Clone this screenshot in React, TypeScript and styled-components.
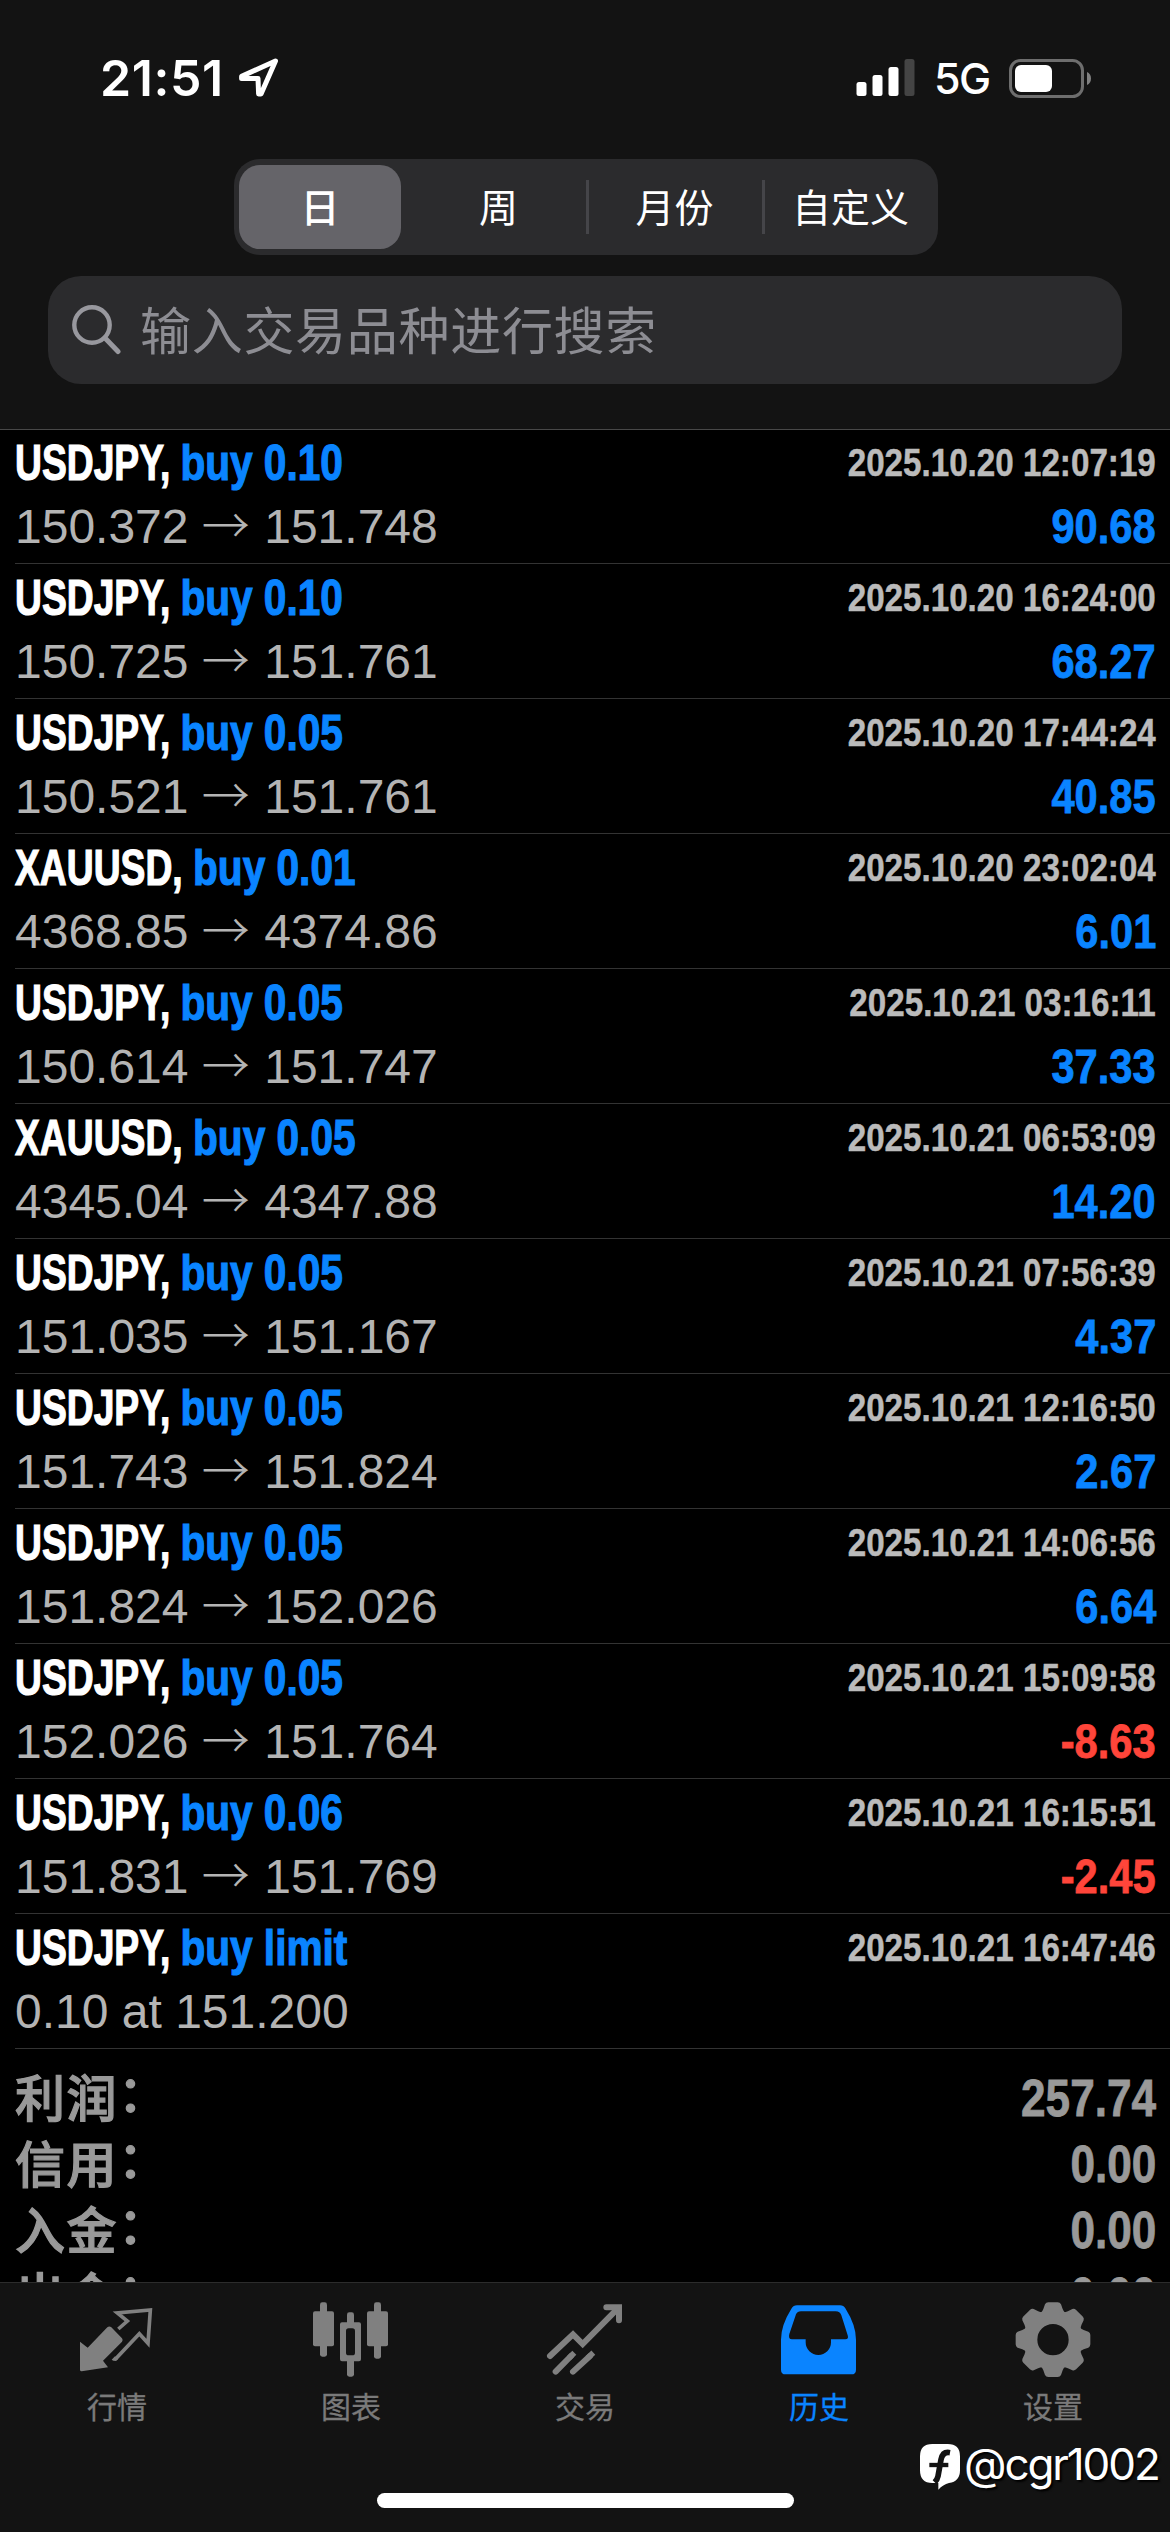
import React, { useState } from "react";
import styled, { createGlobalStyle } from "styled-components";

type Deal = {
  symbol: string;
  action: string;
  time: string;
  open?: string;
  close?: string;
  note?: string;
  profit?: string;
};

const deals: Deal[] = [
  { symbol: "USDJPY", action: "buy 0.10", time: "2025.10.20 12:07:19", open: "150.372", close: "151.748", profit: "90.68" },
  { symbol: "USDJPY", action: "buy 0.10", time: "2025.10.20 16:24:00", open: "150.725", close: "151.761", profit: "68.27" },
  { symbol: "USDJPY", action: "buy 0.05", time: "2025.10.20 17:44:24", open: "150.521", close: "151.761", profit: "40.85" },
  { symbol: "XAUUSD", action: "buy 0.01", time: "2025.10.20 23:02:04", open: "4368.85", close: "4374.86", profit: "6.01" },
  { symbol: "USDJPY", action: "buy 0.05", time: "2025.10.21 03:16:11", open: "150.614", close: "151.747", profit: "37.33" },
  { symbol: "XAUUSD", action: "buy 0.05", time: "2025.10.21 06:53:09", open: "4345.04", close: "4347.88", profit: "14.20" },
  { symbol: "USDJPY", action: "buy 0.05", time: "2025.10.21 07:56:39", open: "151.035", close: "151.167", profit: "4.37" },
  { symbol: "USDJPY", action: "buy 0.05", time: "2025.10.21 12:16:50", open: "151.743", close: "151.824", profit: "2.67" },
  { symbol: "USDJPY", action: "buy 0.05", time: "2025.10.21 14:06:56", open: "151.824", close: "152.026", profit: "6.64" },
  { symbol: "USDJPY", action: "buy 0.05", time: "2025.10.21 15:09:58", open: "152.026", close: "151.764", profit: "-8.63" },
  { symbol: "USDJPY", action: "buy 0.06", time: "2025.10.21 16:15:51", open: "151.831", close: "151.769", profit: "-2.45" },
  { symbol: "USDJPY", action: "buy limit", time: "2025.10.21 16:47:46", note: "0.10 at 151.200" },
];

const totals = [
  { name: "利润", value: "257.74" },
  { name: "信用", value: "0.00" },
  { name: "入金", value: "0.00" },
  { name: "出金", value: "0.00" },
];

const periods = ["日", "周", "月份", "自定义"];

//* icons

const LocationIcon = () => (
  <svg width="42" height="42" viewBox="0 0 42 42" fill="none" stroke="#fff" strokeWidth="5" strokeLinejoin="round">
    <path d="M37.5 4 L3.6 19.4 L3.6 21.4 L20 21.4 L20.6 37 L23 37 Z" />
  </svg>
);

const SignalIcon = () => (
  <svg width="60" height="38" viewBox="0 0 60 38" fill="#fff">
    <rect x="0.5" y="23" width="10" height="14" rx="2.5" />
    <rect x="16.5" y="16" width="10" height="21" rx="2.5" />
    <rect x="32.5" y="8" width="10" height="29" rx="2.5" />
    <rect x="48.5" y="0" width="10" height="37" rx="2.5" fill="#444" />
  </svg>
);

const BatteryIcon = () => (
  <svg width="83" height="39" viewBox="0 0 83 39">
    <rect x="1.5" y="1.5" width="72" height="36" rx="10" fill="none" stroke="#6e6e6e" strokeWidth="3" />
    <rect x="6" y="6" width="37" height="27" rx="6" fill="#fff" />
    <path d="M78 13 C80.5 14 82 16.5 82 19.5 C82 22.5 80.5 25 78 26 Z" fill="#808080" />
  </svg>
);

const SearchIcon = () => (
  <svg width="50" height="50" viewBox="0 0 50 50" fill="none" stroke="#98989e" strokeLinecap="round">
    <circle cx="20" cy="20" r="17.7" strokeWidth="4.4" />
    <path d="M33 33 L46 46.5" strokeWidth="5" />
  </svg>
);

const QuotesIcon = () => (
  <svg width="80" height="80" viewBox="231 80 240 240" fill="#808080">
    <path d="M240 214 L263 232 L322 171 Q328 166 334 171 L366 204 Q370 209 366 214 L309 271 L324 291 L245 303 Q240 303 240 298 Z" />
    <path
      d="M355 176 L382 152 L352 128 L451 119 L444 219 L418 190 L346 267"
      fill="none"
      stroke="#808080"
      strokeWidth="11"
    />
    <path d="M335 268 L345 258 L354 266 L348 272 L340 271 Z" />
  </svg>
);

const ChartIcon = () => (
  <svg width="80" height="80" viewBox="933 80 240 240" fill="#808080">
    <rect x="960" y="96" width="21" height="163" rx="7" />
    <rect x="939" y="123" width="63" height="105" rx="6" />
    <rect x="1122" y="96" width="21" height="169" rx="7" />
    <rect x="1101" y="123" width="63" height="105" rx="6" />
    <rect x="1041" y="126" width="21" height="40" rx="7" />
    <rect x="1041" y="262" width="21" height="57" rx="7" />
    <path
      fillRule="evenodd"
      d="M1026 156 h51 q6 0 6 6 v105 q0 6 -6 6 h-51 q-6 0 -6 -6 v-105 q0 -6 6 -6 Z M1046 174 q-8 0 -8 8 v65 q0 8 8 8 h11 q8 0 8 -8 v-65 q0 -8 -8 -8 Z"
    />
  </svg>
);

const TradeIcon = () => (
  <svg width="80" height="80" viewBox="255 80 240 240" fill="none" stroke="#808080" strokeLinecap="round">
    <path d="M270 257 L339 192 L368 221 L470 118" strokeWidth="18" />
    <path d="M439 111 L477 111 L477 150" strokeWidth="18" />
    <path d="M455 108 L480 108 L480 132 Z" fill="#808080" stroke="none" />
    <path d="M287 304 L333 257 M339 304 L390 257" strokeWidth="18" />
    <path d="M328 262 L343 247 M383 263 L400 247" strokeWidth="17" strokeLinecap="butt" />
  </svg>
);

const HistoryIcon = () => (
  <svg width="80" height="80" viewBox="957 80 240 240" fill="#0a84ff">
    <path
      fillRule="evenodd"
      d="M1011 105 H1140 Q1151 105 1156 114 Q1188 165 1188 208 V298 Q1188 312 1174 312 H977 Q963 312 963 298 V208 Q963 165 995 114 Q1000 105 1011 105 Z M1023 123 Q1012 123 1008 132 L988 191 Q984 207 996 207 H1037 V216 A38 38 0 0 0 1113 216 V207 H1156 Q1167 207 1163 195 L1144 135 Q1140 123 1127 123 Z"
    />
  </svg>
);

const SettingsIcon = () => (
  <svg width="80" height="80" viewBox="-120 -128 240 240" fill="#808080">
    {[0, 45, 90, 135, 180, 225, 270, 315].map((angle) => (
      <path
        key={angle}
        transform={`rotate(${angle})`}
        d="M-37 -80 Q-32 -84 -29 -92 L-24 -106 Q-21 -112 -14 -112 H14 Q21 -112 24 -106 L29 -92 Q32 -84 37 -80 L25 -60 H-25 Z"
      />
    ))}
    <circle r="68" fill="none" stroke="#808080" strokeWidth="42" />
  </svg>
);

const BadgeIcon = () => (
  <svg width="42" height="48" viewBox="0 0 126 144">
    <path d="M40 3 H86 Q123 3 123 40 V82 Q123 116 90 120 Q72 125 58 140 L58 120 H40 Q3 120 3 82 V40 Q3 3 40 3 Z" fill="#fff" />
    <path d="M93 29 Q71 25 66 50 L57 100 Q55 110 47 118" fill="none" stroke="#131313" strokeWidth="17" />
    <path d="M31 66 H88" fill="none" stroke="#131313" strokeWidth="13" />
  </svg>
);

const tabs = [
  { name: "行情", icon: QuotesIcon },
  { name: "图表", icon: ChartIcon },
  { name: "交易", icon: TradeIcon },
  { name: "历史", icon: HistoryIcon },
  { name: "设置", icon: SettingsIcon },
];

function App() {
  const [period, setPeriod] = useState("日");
  const [tab, setTab] = useState("历史");

  return (
    <>
      <GlobalStyle />
      <Screen>
        <Header>
          <StatusBar>
            <StatusLeft>
              <Clock>21:51</Clock>
              <LocationIcon />
            </StatusLeft>
            <StatusRight>
              <SignalIcon />
              <Network>5G</Network>
              <BatteryIcon />
            </StatusRight>
          </StatusBar>

          <Segments>
            {periods.map((name, index) => (
              <Segment key={name} $divider={index > 1} onClick={() => setPeriod(name)}>
                <SegmentPill $active={name === period}>{name}</SegmentPill>
              </Segment>
            ))}
          </Segments>

          <SearchBox>
            <SearchIcon />
            <Placeholder>输入交易品种进行搜索</Placeholder>
          </SearchBox>
        </Header>

        <History>
          {deals.map((deal) => (
            <DealRow key={deal.time}>
              <DealTitle>
                {deal.symbol}, <DealAction>{deal.action}</DealAction>
              </DealTitle>
              <DealTime>{deal.time}</DealTime>
              <DealPrice>
                {deal.note ? (
                  deal.note
                ) : (
                  <>
                    {deal.open} <Arrow>→</Arrow> {deal.close}
                  </>
                )}
              </DealPrice>
              {deal.profit && <DealProfit $loss={deal.profit.startsWith("-")}>{deal.profit}</DealProfit>}
            </DealRow>
          ))}

          <Totals>
            {totals.map((total) => (
              <TotalRow key={total.name}>
                <TotalName>
                  {total.name}
                  <Colon>：</Colon>
                </TotalName>
                <TotalValue>{total.value}</TotalValue>
              </TotalRow>
            ))}
          </Totals>
        </History>

        <TabBar>
          <Tabs>
            {tabs.map(({ name, icon: Icon }) => (
              <Tab key={name} $active={name === tab} onClick={() => setTab(name)}>
                <Icon />
                <span>{name}</span>
              </Tab>
            ))}
          </Tabs>
          <HomeIndicator />
        </TabBar>

        <Watermark>
          <BadgeIcon />
          <WatermarkName>@cgr1002</WatermarkName>
        </Watermark>
      </Screen>
    </>
  );
}

const GlobalStyle = createGlobalStyle`
  * {
    box-sizing: border-box;
  }

  body {
    margin: 0;
    background: #000;
    font-family: "Liberation Sans", "Noto Sans CJK SC", sans-serif;
  }

  svg {
    display: block;
    flex-shrink: 0;
  }
`;

const Screen = styled.div`
  position: relative;
  display: flex;
  flex-direction: column;
  width: 1170px;
  height: 2532px;
  overflow: hidden;
  background: #000;
`;

const Header = styled.header`
  display: flex;
  flex-direction: column;
  align-items: center;
  flex-shrink: 0;
  height: 430px;
  background: #131313;
  border-bottom: 1px solid #484848;
`;

const StatusBar = styled.div`
  display: flex;
  justify-content: space-between;
  align-items: center;
  width: 100%;
  height: 159px;
  padding: 0 78px 3px 100px;
`;

const StatusLeft = styled.div`
  display: flex;
  align-items: center;
  gap: 14px;
`;

const StatusRight = styled.div`
  display: flex;
  align-items: center;
  gap: 18px;
`;

const Clock = styled.span`
  width: 124px;
  color: #fff;
  font: 600 50px/60px Inter, sans-serif;
  letter-spacing: 0.6px;
  white-space: nowrap;
`;

const Network = styled.span`
  width: 57px;
  color: #fff;
  font: 500 43px/50px Inter, sans-serif;
  letter-spacing: -1.5px;
`;

const Segments = styled.div`
  display: grid;
  grid-template-columns: repeat(4, 1fr);
  align-items: center;
  width: 704px;
  height: 96px;
  margin-left: 2px;
  background: #2b2b2d;
  border-radius: 26px;
`;

const Segment = styled.div<{ $divider: boolean }>`
  display: flex;
  align-items: center;
  justify-content: center;
  height: 54px;
  border-left: 3px solid ${(props) => (props.$divider ? "#454549" : "transparent")};
`;

const SegmentPill = styled.div<{ $active: boolean }>`
  flex-shrink: 0;
  width: 162px;
  height: 84px;
  margin-left: ${(props) => (props.$active ? "-7px" : "-2px")};
  border-radius: 21px;
  background: ${(props) => (props.$active ? "#656469" : "transparent")};
  color: #fff;
  font: ${(props) => (props.$active ? 500 : 400)} 39px/80px "Noto Sans CJK SC", sans-serif;
  text-align: center;
`;

const SearchBox = styled.div`
  display: flex;
  align-items: center;
  gap: 18px;
  width: 1074px;
  height: 108px;
  margin-top: 21px;
  padding-left: 24px;
  background: #2b2b2d;
  border-radius: 33px;
`;

const Placeholder = styled.span`
  padding-bottom: 4px;
  color: #8d8d93;
  font: 400 51px/70px "Noto Sans CJK SC", sans-serif;
  letter-spacing: 0.7px;
`;

const History = styled.main`
  flex: 1;
  min-height: 0;
  margin-top: -1px;
  overflow: hidden;
`;

const DealRow = styled.div`
  display: grid;
  grid-template-columns: 1fr auto;
  grid-template-rows: 65px 66px;
  height: 135px;
  margin-left: 15px;
  padding-right: 14px;
  border-bottom: 1px solid #333;
  white-space: nowrap;
`;

/* the Latin face is squeezed sideways to get the condensed look */
const DealTitle = styled.div`
  justify-self: start;
  color: #fff;
  font-size: 50px;
  font-weight: 700;
  line-height: 69px;
  transform: scaleX(0.745);
  transform-origin: left;
  -webkit-text-stroke: 1.2px currentColor;
`;

const DealAction = styled.span`
  display: inline-block;
  color: #0a84ff;
  transform: scaleX(1.09);
  transform-origin: left;
`;

const DealTime = styled.div`
  color: #bbb;
  font-size: 39.5px;
  font-weight: 700;
  line-height: 66px;
  transform: scaleX(0.84);
  transform-origin: right;
  -webkit-text-stroke: 0.5px currentColor;
`;

const DealPrice = styled.div`
  color: #b4b4b4;
  font-size: 48px;
  line-height: 66px;
`;

const Arrow = styled.span`
  margin-right: 1px;
  font-family: "Noto Sans CJK SC", sans-serif;
  font-weight: 300;
  line-height: 0;
`;

const DealProfit = styled.div<{ $loss: boolean }>`
  justify-self: end;
  color: ${(props) => (props.$loss ? "#ff453a" : "#0a84ff")};
  font-size: 49px;
  font-weight: 700;
  line-height: 65px;
  transform: scaleX(0.85);
  transform-origin: right;
  -webkit-text-stroke: 0.8px currentColor;
`;

const Totals = styled.section`
  padding: 16px 14px 0 15px;
`;

const TotalRow = styled.div`
  display: flex;
  justify-content: space-between;
  height: 66px;
  color: #999;
`;

const TotalName = styled.span`
  font: 500 50px/61px "Noto Sans CJK SC", sans-serif;
  letter-spacing: 1.5px;
  -webkit-text-stroke: 1.2px currentColor;
`;

const Colon = styled.span`
  line-height: 0;
  vertical-align: 5px;
`;

const TotalValue = styled.span`
  font-size: 51px;
  font-weight: 700;
  line-height: 67px;
  transform: scaleX(0.865);
  transform-origin: right;
  -webkit-text-stroke: 0.8px currentColor;
`;

const TabBar = styled.nav`
  display: flex;
  flex-direction: column;
  align-items: center;
  justify-content: space-between;
  flex-shrink: 0;
  height: 250px;
  padding: 14px 0 24px;
  background: #131313;
  border-top: 1px solid #2c2c2c;
`;

const Tabs = styled.div`
  display: grid;
  grid-template-columns: repeat(5, 1fr);
  width: 100%;
`;

const Tab = styled.div<{ $active: boolean }>`
  display: flex;
  flex-direction: column;
  align-items: center;
  gap: 6px;
  color: ${(props) => (props.$active ? "#0a84ff" : "#7a7a7a")};
  font: 400 30px/44px "Noto Sans CJK SC", sans-serif;
  -webkit-text-stroke: 0.3px currentColor;
`;

const HomeIndicator = styled.div`
  width: 417px;
  height: 15px;
  border-radius: 8px;
  background: #fff;
`;

const Watermark = styled.div`
  position: absolute;
  right: 9px;
  bottom: 35px;
  display: flex;
  align-items: center;
  gap: 3px;
  width: 242px;
`;

const WatermarkName = styled.span`
  padding-bottom: 5px;
  color: #fff;
  font: 400 44px/56px Inter, sans-serif;
  letter-spacing: -2.1px;
  text-shadow: 2px 2px 2px #000;
`;

export default App;
